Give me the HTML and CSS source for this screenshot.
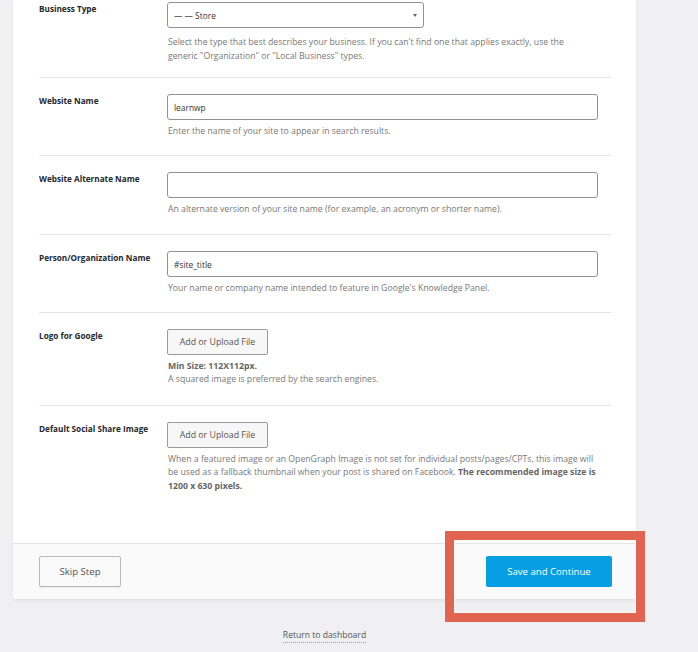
FILE: index.html
```html
<!DOCTYPE html>
<html lang="en">
<head>
<meta charset="utf-8">
<title>Setup Wizard</title>
<link rel="stylesheet" href="styles.css">
</head>
<body>
<div class="page">
  <div class="card">
    <div class="card-body">
      <div class="row row-first">
        <div class="label">Business Type</div>
        <div class="field">
          <div class="select">
            <span>— — Store</span>
            <span class="arrow"></span>
          </div>
          <p class="desc desc-select">Select the type that best describes your business. If you can't find one that applies exactly, use the<br>generic "Organization" or "Local Business" types.</p>
        </div>
      </div>
      <div class="row">
        <div class="label">Website Name</div>
        <div class="field">
          <div class="input">learnwp</div>
          <p class="desc">Enter the name of your site to appear in search results.</p>
        </div>
      </div>
      <div class="row row-alt">
        <div class="label">Website Alternate Name</div>
        <div class="field">
          <div class="input"></div>
          <p class="desc">An alternate version of your site name (for example, an acronym or shorter name).</p>
        </div>
      </div>
      <div class="row">
        <div class="label">Person/Organization Name</div>
        <div class="field">
          <div class="input">#site_title</div>
          <p class="desc">Your name or company name intended to feature in Google's Knowledge Panel.</p>
        </div>
      </div>
      <div class="row row-logo">
        <div class="label">Logo for Google</div>
        <div class="field">
          <div class="upload">Add or Upload File</div>
          <p class="desc"><b>Min Size: 112X112px.</b><br>A squared image is preferred by the search engines.</p>
        </div>
      </div>
      <div class="row row-last">
        <div class="label">Default Social Share Image</div>
        <div class="field">
          <div class="upload">Add or Upload File</div>
          <p class="desc">When a featured image or an OpenGraph Image is not set for individual posts/pages/CPTs, this image will<br>be used as a fallback thumbnail when your post is shared on Facebook. <b>The recommended image size is</b><br><b>1200 x 630 pixels.</b></p>
        </div>
      </div>
    </div>
    <div class="card-footer">
      <div class="btn btn-skip">Skip Step</div>
      <div class="btn btn-save">Save and Continue</div>
    </div>
  </div>
  <div class="return"><span class="return-link">Return to dashboard</span></div>
  <div class="highlight"></div>
</div>
</body>
</html>
```
FILE: styles.css
```css
html, body {
  margin: 0;
  padding: 0;
}
body {
  background: #f0f0f2;
  font-family: "Open Sans", "Noto Sans", sans-serif;
  color: #444;
  width: 698px;
  height: 652px;
  overflow: hidden;
}
.page {
  position: relative;
  padding-left: 13px;
}
.card {
  width: 623px;
  background: #fff;
  box-shadow: 0 2px 3px rgba(0,0,0,0.06);
  border-radius: 0 0 3px 3px;
}
.card-body {
  padding: 0 25px 34px 26px;
}
.row {
  display: flex;
  padding: 16px 0 16px;
  border-bottom: 1px solid #e6e6e8;
}
.row-first {
  padding-top: 2px;
  padding-bottom: 14px;
}
.row-alt {
  padding-bottom: 18px;
}
.row-logo {
  padding-bottom: 18px;
}
.row-last {
  border-bottom: none;
}
.label {
  width: 129px;
  flex: none;
  font-size: 8.2px;
  font-weight: 700;
  color: #23282d;
  line-height: 13.5px;
}
.field {
  width: 430px;
}
.select {
  width: 243px;
  height: 24px;
  border: 1px solid #8f9397;
  border-radius: 3px;
  display: flex;
  align-items: center;
  justify-content: space-between;
  padding: 0 6px;
  box-sizing: content-box;
  font-size: 8.4px;
  color: #333;
  margin-left: -1px;
}
.arrow {
  width: 0;
  height: 0;
  border-left: 2px solid transparent;
  border-right: 2px solid transparent;
  border-top: 3px solid #666;
}
.input {
  border: 1px solid #8f9397;
  border-radius: 3px;
  box-sizing: border-box;
  height: 26px;
  width: 431px;
  margin-left: -1px;
  padding: 0 6px;
  display: flex;
  align-items: center;
  font-size: 8.4px;
  color: #333;
}
.upload {
  width: 101px;
  height: 26px;
  box-sizing: border-box;
  margin-left: -1px;
  border: 1px solid #9a9a9a;
  border-radius: 2px;
  background: #f7f7f7;
  display: flex;
  align-items: center;
  justify-content: center;
  font-size: 8.8px;
  color: #555;
}
.desc {
  margin: 5px 0 0;
  font-size: 8.7px;
  line-height: 13.5px;
  color: #777;
  white-space: nowrap;
}
.desc b {
  font-weight: 700;
  color: #666;
}
.desc-select {
  margin-top: 8px;
}
.card-footer {
  background: #fafafa;
  border-top: 1px solid #e4e4e6;
  height: 55px;
  display: flex;
  align-items: center;
  justify-content: space-between;
  padding: 0 24px 0 26px;
  border-radius: 0 0 3px 3px;
}
.btn {
  height: 31px;
  box-sizing: border-box;
  display: flex;
  align-items: center;
  justify-content: center;
  font-size: 9.6px;
  border-radius: 2px;
}
.btn-skip {
  width: 82px;
  border: 1px solid #b9bbbe;
  background: #f9f9fa;
  color: #555;
  box-shadow: 0 1px 0 rgba(0,0,0,0.05);
}
.btn-save {
  width: 126px;
  background: #079ee3;
  color: #fff;
}
.return {
  width: 623px;
  text-align: center;
  margin-top: 22px;
}
.return-link {
  font-size: 8.6px;
  color: #555;
  border-bottom: 1px dotted #999;
  padding-bottom: 1px;
}
.highlight {
  position: absolute;
  left: 445px;
  top: 531px;
  width: 200px;
  height: 91px;
  box-sizing: border-box;
  border: 9px solid #e0644f;
  box-shadow: inset 0 0 0 1px rgba(255,255,255,0.55);
}
```
